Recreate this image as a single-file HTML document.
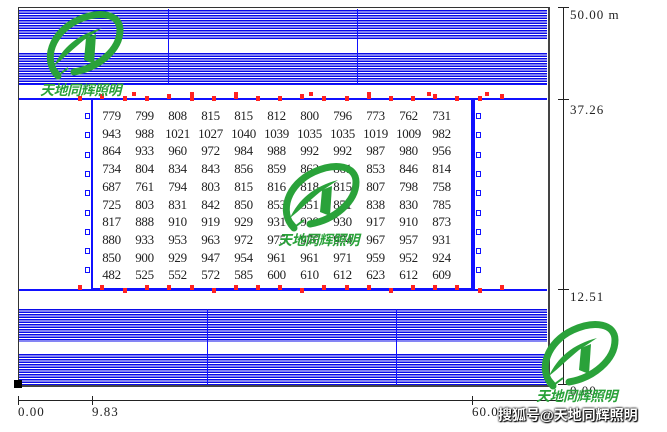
<!DOCTYPE html>
<html><head><meta charset="utf-8"><style>
body{margin:0;width:667px;height:432px;background:#fff;position:relative;overflow:hidden;font-family:"Liberation Serif","Noto Serif CJK SC",serif;}
.a{position:absolute}
.str{position:absolute;background:repeating-linear-gradient(to bottom,#0a0ae8 0,#0a0ae8 1.3px,#fff 1.3px,#fff 2.5px);}
.num{position:absolute;font-size:13px;color:#222;width:33px;text-align:center;letter-spacing:-0.3px}
.lbl{position:absolute;font-size:13px;color:#222;letter-spacing:1px}
.r{position:absolute;width:4px;height:5px;background:#f22;}
.b{position:absolute;width:3px;height:4px;border:1px solid #11f;background:#fff}
.wm{position:absolute;font-family:"Liberation Sans","Noto Sans CJK SC",sans-serif;color:#2aa23a;font-style:italic;font-size:14px;font-weight:bold;letter-spacing:-0.5px}
</style></head><body>
<div class="a" style="left:18px;top:7px;width:529px;height:377px;border:1px solid #333;border-right:2px solid #444;border-bottom:2px solid #444"></div>
<div class="str" style="left:19px;top:10px;width:528px;height:29px"></div>
<div class="str" style="left:19px;top:53px;width:528px;height:31px"></div>
<div class="a" style="left:19px;top:84px;width:528px;height:1px;background:#11f"></div>
<div class="a" style="left:168px;top:9px;width:1px;height:76px;background:#11f"></div>
<div class="a" style="left:357px;top:9px;width:1px;height:76px;background:#11f"></div>
<div class="a" style="left:19px;top:98px;width:528px;height:2px;background:#11f"></div>
<div class="a" style="left:19px;top:289px;width:528px;height:2px;background:#11f"></div>
<div class="str" style="left:19px;top:309px;width:528px;height:33px"></div>
<div class="str" style="left:19px;top:354px;width:528px;height:31px"></div>
<div class="a" style="left:207px;top:309px;width:1px;height:76px;background:#11f"></div>
<div class="a" style="left:396px;top:309px;width:1px;height:76px;background:#11f"></div>
<div class="a" style="left:91px;top:100px;width:380px;height:188px;border:2px solid #11f;border-top:none;border-bottom:3px solid #11f"></div>
<div class="a" style="left:471px;top:99px;width:3px;height:192px;background:#11f"></div>
<div class="a" style="left:14px;top:380px;width:8px;height:8px;background:#000"></div>
<div id="nums"></div>
<script>
var d=[[779,799,808,815,815,812,800,796,773,762,731],[943,988,1021,1027,1040,1039,1035,1035,1019,1009,982],[864,933,960,972,984,988,992,992,987,980,956],[734,804,834,843,856,859,862,861,853,846,814],[687,761,794,803,815,816,818,815,807,798,758],[725,803,831,842,850,853,851,851,838,830,785],[817,888,910,919,929,931,929,930,917,910,873],[880,933,953,963,972,975,976,974,967,957,931],[850,900,929,947,954,961,961,971,959,952,924],[482,525,552,572,585,600,610,612,623,612,609]];
var h='';for(var i=0;i<10;i++)for(var j=0;j<11;j++){h+='<div class="num" style="left:'+(95+j*33)+'px;top:'+(108+i*17.7)+'px">'+d[i][j]+'</div>';}
var rx=[78,100,123,145,167,190,212,234,256,278,300,322,345,367,389,411,433,455,478,500];
for(var k=0;k<rx.length;k++){h+='<div class="r" style="left:'+rx[k]+'px;top:'+(96+(k%3==1?-2:0))+'px"></div>';h+='<div class="r" style="left:'+rx[k]+'px;top:'+(285+(k%4==2?3:0))+'px"></div>';}
var ex=[132,190,234,309,367,427,485];for(k=0;k<ex.length;k++)h+='<div class="r" style="left:'+ex[k]+'px;top:92px;width:4px;height:4px"></div>';
for(k=0;k<9;k++){h+='<div class="b" style="left:85px;top:'+(113+k*19.3)+'px"></div><div class="b" style="left:476px;top:'+(113+k*19.3)+'px"></div>';}
document.getElementById('nums').innerHTML=h;
</script>
<div class="a" style="left:563px;top:7px;width:1px;height:377px;background:#222"></div>
<div class="a" style="left:558px;top:7px;width:11px;height:1px;background:#222"></div>
<div class="a" style="left:558px;top:99px;width:11px;height:1px;background:#222"></div>
<div class="a" style="left:558px;top:289px;width:11px;height:1px;background:#222"></div>
<div class="a" style="left:558px;top:384px;width:11px;height:1px;background:#222"></div>
<div class="lbl" style="left:570px;top:7px">50.00 m</div>
<div class="lbl" style="left:570px;top:102px">37.26</div>
<div class="lbl" style="left:570px;top:289px">12.51</div>
<div class="lbl" style="left:570px;top:383px">0.00</div>
<div class="a" style="left:18px;top:400px;width:545px;height:1px;background:#222"></div>
<div class="a" style="left:18px;top:396px;width:1px;height:9px;background:#222"></div>
<div class="a" style="left:92px;top:396px;width:1px;height:9px;background:#222"></div>
<div class="a" style="left:472px;top:396px;width:1px;height:9px;background:#222"></div>
<div class="lbl" style="left:18px;top:404px">0.00</div>
<div class="lbl" style="left:92px;top:404px">9.83</div>
<div class="lbl" style="left:472px;top:404px">60.0</div>
<svg class="a" style="left:0;top:0" width="667" height="432">
<defs><g id="lg">
<path d="M20 66 C4 50 14 22 40 10 C62 0 82 4 82 20 C82 40 60 58 36 62" fill="none" stroke="#2aa23a" stroke-width="7" stroke-linecap="round"/>
<path d="M16 56 C24 38 40 24 64 18 L46 30 C36 38 26 48 16 56 Z" fill="#2aa23a"/>
<path d="M48 28 L58 24 L56 54 L46 50 Z" fill="#2aa23a"/>
<path d="M12 52 L22 64 L30 58" fill="none" stroke="#2aa23a" stroke-width="2"/>
</g></defs>
<use href="#lg" x="38" y="10"/>
<use href="#lg" x="274" y="162"/>
<use href="#lg" x="533" y="320"/>
</svg>
<div class="wm" style="left:40px;top:80px">天地同辉照明</div>
<div class="wm" style="left:278px;top:230px">天地同辉照明</div>
<div class="wm" style="left:536px;top:386px">天地同辉照明</div>
<div class="a" style="left:498px;top:405px;font-family:'Liberation Sans','Noto Sans CJK SC',sans-serif;font-size:14px;color:#fff;font-weight:bold;text-shadow:0 0 2px #000,0 0 2px #000,1px 1px 1px #000">搜狐号@天地同辉照明</div>
</body></html>
